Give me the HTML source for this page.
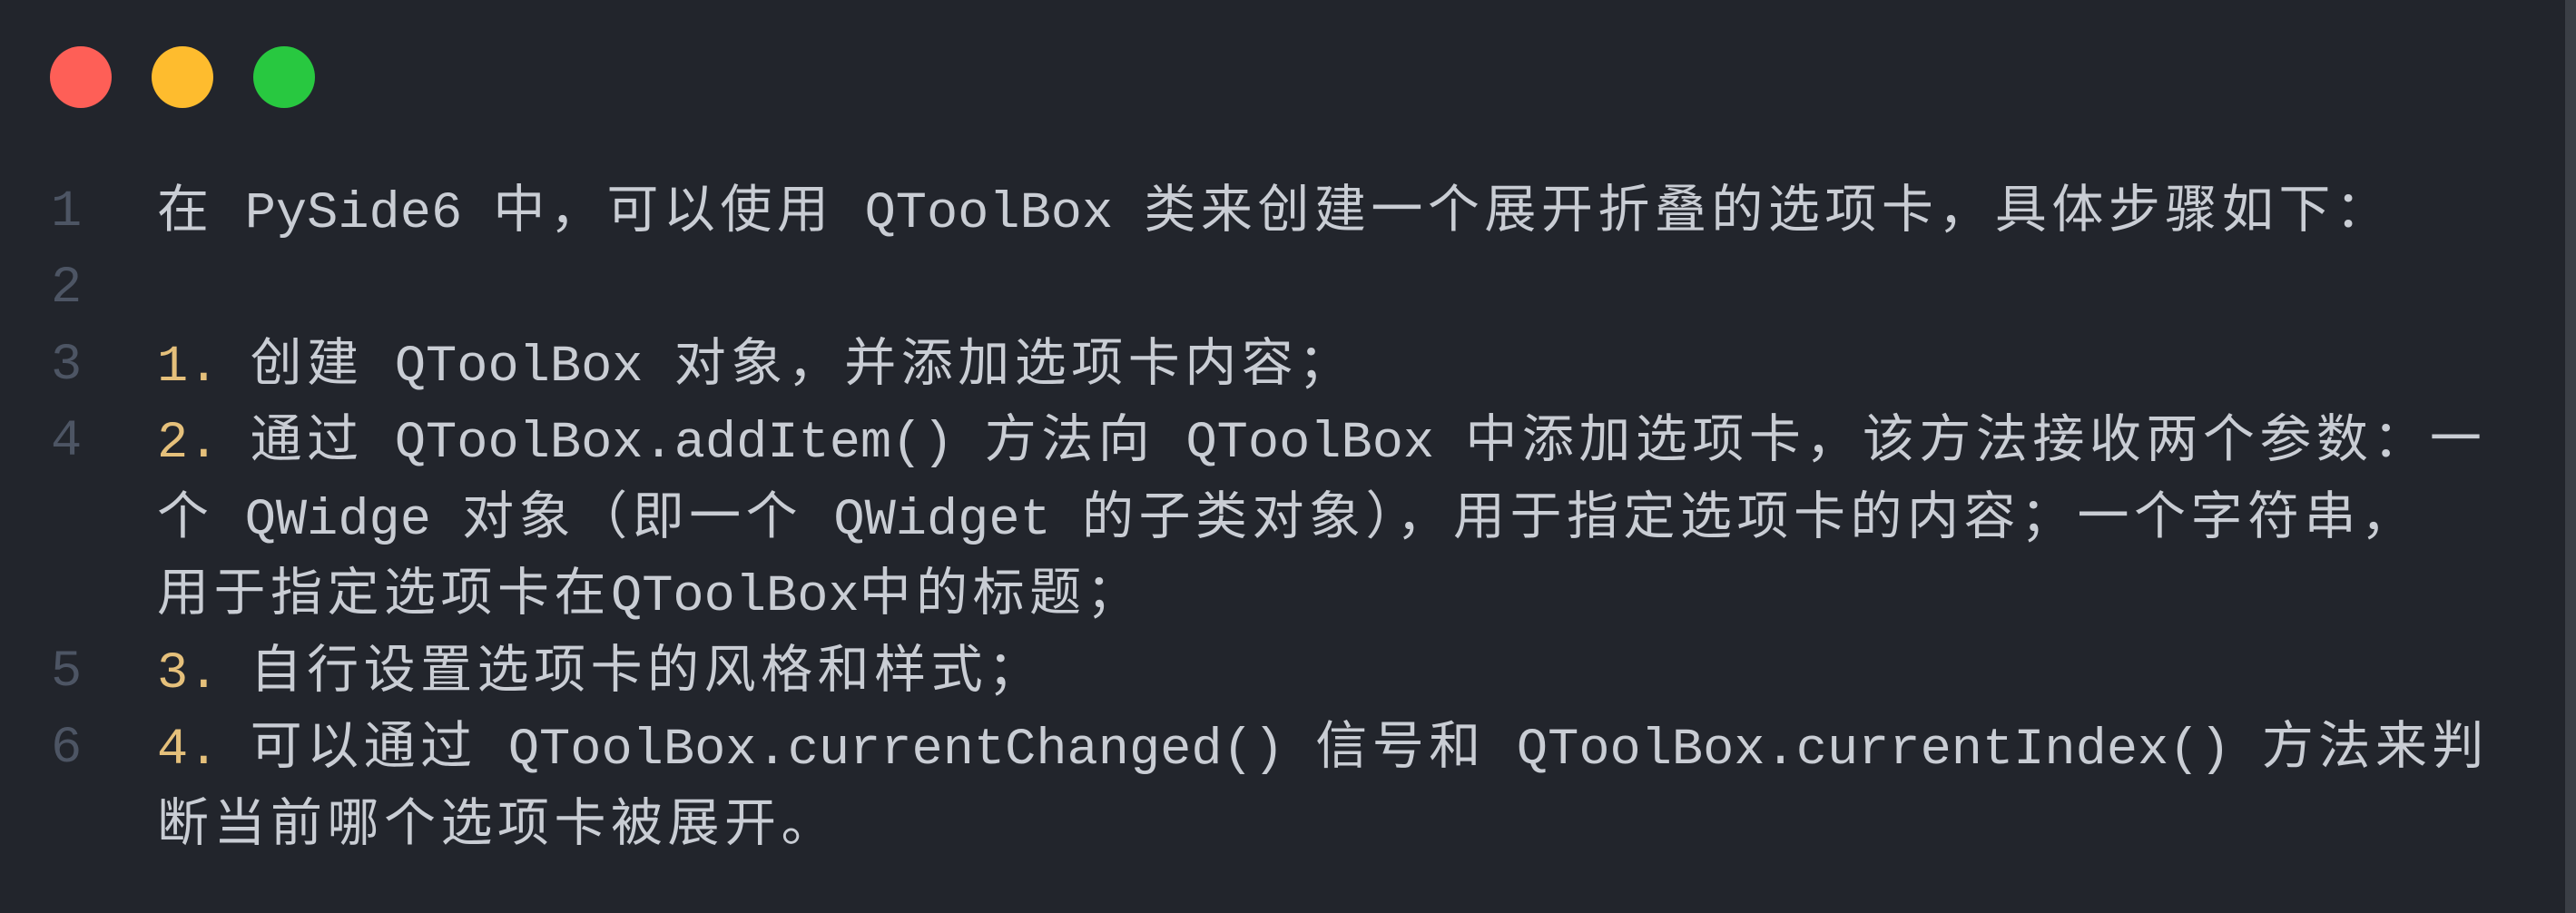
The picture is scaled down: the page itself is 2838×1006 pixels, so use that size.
<!DOCTYPE html>
<html><head><meta charset="utf-8"><style>
html,body{margin:0;padding:0;}
body{width:2838px;height:1006px;background:#22252c;position:relative;overflow:hidden;
font-family:"Liberation Mono","Noto Sans CJK SC",monospace;font-size:57px;color:#c9cdd4;}
.strip{position:absolute;right:0;top:0;width:12px;height:1006px;background:#3b3f46;}
.dot{position:absolute;top:51px;width:68px;height:68px;border-radius:50%;}
.l{position:absolute;left:173px;height:84px;line-height:84px;white-space:pre;}
.n{position:absolute;left:56px;height:84px;line-height:84px;color:#4d5564;margin-top:8px;}
.c{letter-spacing:5.5px;font-family:"Noto Sans CJK SC","Liberation Mono",sans-serif;font-weight:400;}
.y{color:#e5c07b;}
</style></head><body>
<div class="strip"></div>
<div class="dot" style="left:55px;background:#fe5f57"></div>
<div class="dot" style="left:167px;background:#febc2e"></div>
<div class="dot" style="left:279px;background:#28c840"></div>

<div class="n" style="top:184px">1</div>
<div class="n" style="top:268px">2</div>
<div class="n" style="top:353px">3</div>
<div class="n" style="top:437px">4</div>
<div class="n" style="top:691px">5</div>
<div class="n" style="top:775px">6</div>

<div class="l" style="top:184px"><span class="c">在</span> PySide6 <span class="c">中，可以使用</span> QToolBox <span class="c">类来创建一个展开折叠的选项卡，具体步骤如下：</span></div>
<div class="l" style="top:353px"><span class="y">1.</span> <span class="c">创建</span> QToolBox <span class="c">对象，并添加选项卡内容；</span></div>
<div class="l" style="top:437px"><span class="y">2.</span> <span class="c">通过</span> QToolBox.addItem() <span class="c">方法向</span> QToolBox <span class="c">中添加选项卡，该方法接收两个参数：一</span></div>
<div class="l" style="top:522px"><span class="c">个</span> QWidge <span class="c">对象（即一个</span> QWidget <span class="c">的子类对象），用于指定选项卡的内容；一个字符串，</span></div>
<div class="l" style="top:606px"><span class="c">用于指定选项卡在</span>QToolBox<span class="c">中的标题；</span></div>
<div class="l" style="top:691px"><span class="y">3.</span> <span class="c">自行设置选项卡的风格和样式；</span></div>
<div class="l" style="top:775px"><span class="y">4.</span> <span class="c">可以通过</span> QToolBox.currentChanged() <span class="c">信号和</span> QToolBox.currentIndex() <span class="c">方法来判</span></div>
<div class="l" style="top:860px"><span class="c">断当前哪个选项卡被展开。</span></div>
</body></html>
